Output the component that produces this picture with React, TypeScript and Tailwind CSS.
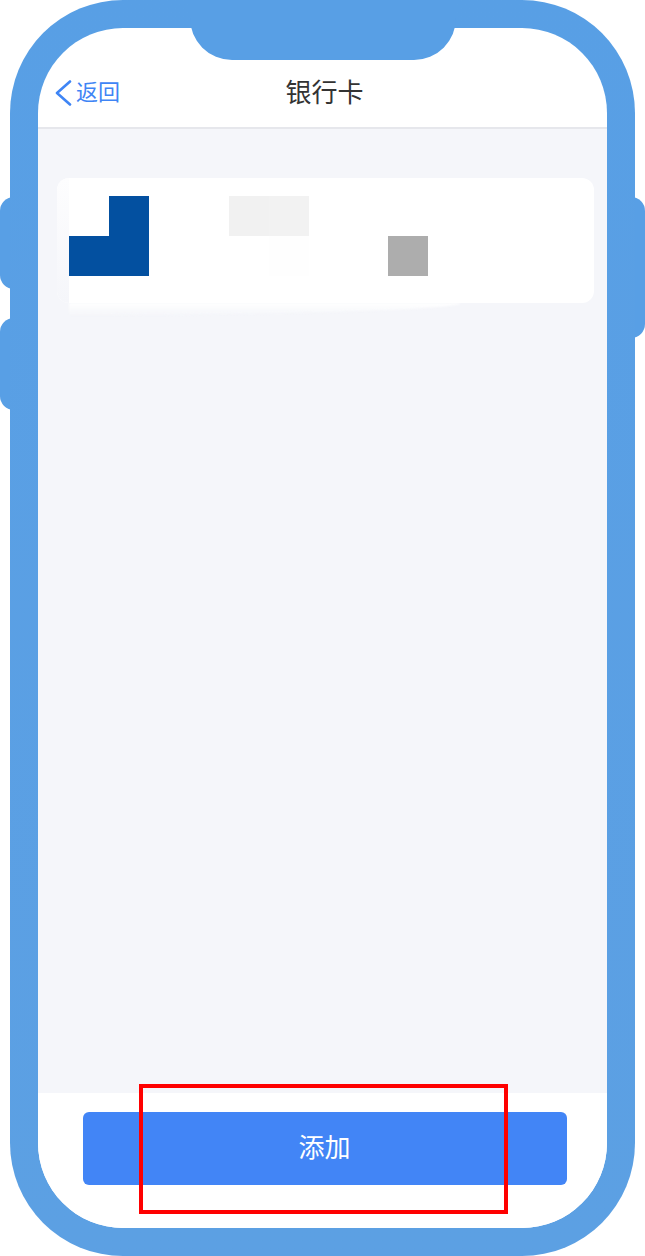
// Phone mockup with the bank card list; the card contents are pixelated in the picture.
const cjk = "font-['Liberation_Sans','Noto_Sans_CJK_SC',sans-serif]";

function BankCard() {
  return (
    <div className="relative mt-[49px] ml-[19px] h-[125px] w-[537px] rounded-xl bg-white">
      <div className="absolute top-0 bottom-0 left-0 w-3 rounded-l-xl bg-gradient-to-b from-[#fdfdfe] to-[#f5f6fa]" />
      {/* mosaic blocks, 40px grid */}
      <div className="relative ml-3 grid grid-cols-[repeat(9,40px)] grid-rows-[repeat(2,40px)] pt-[18px]">
        <div />
        <div className="bg-[#0350a0]" />
        <div />
        <div />
        <div className="bg-[#f1f1f1]" />
        <div className="bg-[#f2f2f2]" />
        <div />
        <div />
        <div />
        <div className="bg-[#0350a0]" />
        <div className="bg-[#0350a0]" />
        <div />
        <div />
        <div />
        <div className="bg-[#fefefe]" />
        <div />
        <div />
        <div className="ml-[-1px] w-10 bg-[#adadad]" />
      </div>
      <div className="absolute top-[125px] left-3 h-[12px] w-[392px] rounded-br-[100%] bg-gradient-to-b from-white to-[#f5f6fa] blur-[1px]" />
    </div>
  );
}

export default function App() {
  return (
    <div className={`relative h-[1256px] w-[645px] overflow-hidden bg-white px-2.5 ${cjk}`}>
      {/* side buttons */}
      <div className="absolute top-[197px] left-0 h-[92px] w-5 rounded-l-[14px] bg-[#589fe5]" />
      <div className="absolute top-[318px] left-0 h-[92px] w-5 rounded-l-[14px] bg-[#589fe5]" />
      <div className="absolute top-[197px] right-0 h-[141px] w-5 rounded-r-[14px] bg-[#589fe5]" />

      <div className="relative h-full rounded-[113px] bg-gradient-to-b from-[#589fe5] to-[#5ca0e3] p-7">
        <div className="flex h-full flex-col overflow-hidden rounded-[85px] bg-white">
          <header className="relative flex h-[101px] shrink-0 items-center justify-center border-b-2 border-[#e6e7ec] pt-[31px]">
            <div className="absolute top-[52px] left-4 flex items-center text-[#3f85f5]">
              <svg width="20" height="26" viewBox="0 0 20 26" fill="none" stroke="currentColor" strokeWidth="2.6" strokeLinecap="round" strokeLinejoin="round">
                <path d="M16 1.5 3 13l13 11.5" />
              </svg>
              <span className="ml-[2px] text-[22px] leading-none">返回</span>
            </div>
            <h1 className="ml-1 text-[26px] leading-none font-normal text-[#333333]">银行卡</h1>
          </header>
          <main className="flex-1 bg-[#f5f6fa]">
            <BankCard />
          </main>
          <footer className="flex h-[135px] shrink-0 justify-center bg-white pt-[19px]">
            <button className="ml-1 h-[73px] w-[484px] rounded-md bg-[#4285f6] text-[26px] text-white">添加</button>
          </footer>
        </div>
        {/* notch */}
        <div className="absolute top-0 left-[180px] h-[60px] w-[266px] rounded-b-[42px] bg-[#589fe5]" />
      </div>

      {/* red highlight around the button */}
      <div className="absolute top-[1084px] left-[139px] h-[130px] w-[369px] border-4 border-[#ff0000]" />
    </div>
  );
}
